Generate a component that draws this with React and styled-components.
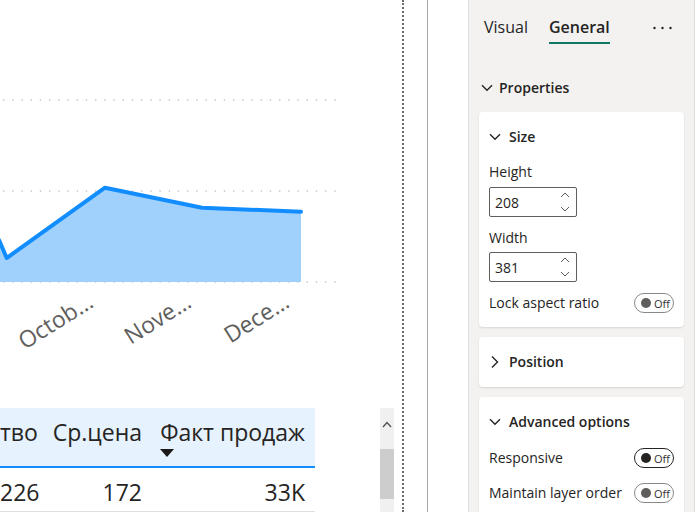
import React from "react";
import styled, { createGlobalStyle } from "styled-components";

const Global = createGlobalStyle`
  html, body { margin: 0; padding: 0; background: #fff; }
  body { font-family: "Open Sans", "Noto Sans", sans-serif; color: #252423; }
  * { box-sizing: border-box; }
`;

const Shell = styled.div`
  display: flex;
  width: 695px;
  height: 512px;
  overflow: hidden;
  background: #fff;
`;

const Canvas = styled.div`
  width: 404px;
  flex: none;
  border-right: 2px dotted #6a6a6a;
  display: flex;
  flex-direction: column;
  overflow: hidden;
`;

const ChartSvg = styled.svg`
  display: block;
  flex: none;
`;

const TableArea = styled.div`
  display: flex;
  align-items: flex-start;
`;

const Table = styled.div`
  width: 315px;
  flex: none;
`;

const Row = styled.div`
  display: grid;
  grid-template-columns: max-content 1fr 163px;
  padding-right: 10px;
  justify-items: end;
  font-size: 23px;
  line-height: 28px;
  white-space: nowrap;
  background: ${(p) => (p.$head ? "#e6f2fd" : "#fff")};
  border-bottom: ${(p) => (p.$head ? "2px solid #118dff" : "1px solid #e1dfdd")};
  padding-top: 10px;
  padding-bottom: ${(p) => (p.$head ? "9px" : "5px")};
  height: ${(p) => (p.$head ? "60px" : "44px")};
`;

const HeadCell = styled.div`
  display: flex;
  flex-direction: column;
  align-items: flex-end;
  min-width: 35px;
`;

const SortMark = styled.div`
  align-self: flex-start;
  margin-top: 3px;
  width: 0;
  height: 0;
  border-left: 7.5px solid transparent;
  border-right: 7.5px solid transparent;
  border-top: 8px solid #1b1a19;
`;

const Cell = styled.div`
  min-width: 35px;
  text-align: right;
`;

const Scrollbar = styled.div`
  margin-left: 65px;
  width: 14px;
  height: 104px;
  background: #f0f0f0;
  display: flex;
  flex-direction: column;
  align-items: center;
`;

const ScrollArrow = styled.svg`
  margin-top: 13px;
  display: block;
`;

const ScrollThumb = styled.div`
  margin-top: 21px;
  width: 14px;
  height: 50px;
  background: #cdcdcd;
`;

const Gutter = styled.div`
  width: 23px;
  flex: none;
`;

const Pane = styled.div`
  width: 41px;
  flex: none;
  border-left: 1px solid #a6a6a6;
`;

const Panel = styled.div`
  flex: 1;
  background: #f3f2f1;
  border-left: 1px solid #e1dfdd;
  border-right: 1px solid #e1dfdd;
  padding: 0 10px;
  display: flex;
  flex-direction: column;
`;

const TabBar = styled.div`
  display: flex;
  align-items: flex-start;
  padding: 16px 0 0 5px;
  gap: 21px;
`;

const Tab = styled.div`
  font-size: 16px;
  line-height: 22px;
  padding-bottom: 4px;
  font-weight: ${(p) => (p.$active ? 600 : 400)};
  border-bottom: 2px solid ${(p) => (p.$active ? "#117865" : "transparent")};
  color: #252423;
`;

const More = styled.svg`
  margin-left: auto;
  margin-right: 11px;
  margin-top: 10px;
  display: block;
`;

const SectionHead = styled.div`
  display: flex;
  align-items: center;
  gap: 6px;
  margin: 34px 0 14px 2px;
  font-size: 14px;
  font-weight: 600;
  line-height: 20px;
`;

const Card = styled.div`
  background: #fff;
  border-radius: 4px;
  box-shadow: 0 1px 2px rgba(0, 0, 0, 0.12);
  padding: 15px 10px ${(p) => (p.$pb || 15)}px 10px;
  margin-bottom: 10px;
`;

const CardHead = styled.div`
  display: flex;
  align-items: center;
  gap: 8px;
  font-size: 14px;
  font-weight: 600;
  line-height: 20px;
`;

const Label = styled.div`
  font-size: 14px;
  line-height: 20px;
  margin-top: ${(p) => p.$mt || 0}px;
`;

const NumBox = styled.div`
  margin-top: ${(p) => p.$mt || 5}px;
  width: 88px;
  height: 30px;
  border: 1px solid #605e5c;
  border-radius: 2px;
  display: flex;
  align-items: center;
  justify-content: space-between;
  padding: 0 6px 0 5px;
  font-size: 14px;
`;

const Spin = styled.div`
  display: flex;
  flex-direction: column;
  gap: 8px;
`;

const ToggleRow = styled.div`
  display: flex;
  align-items: center;
  justify-content: space-between;
  font-size: 14px;
  line-height: 20px;
  margin-top: ${(p) => p.$mt || 0}px;
`;

const Toggle = styled.div`
  width: 40px;
  height: 20px;
  border-radius: 10px;
  border: 1px solid ${(p) => (p.$hot ? "#252423" : "#8a8886")};
  display: flex;
  align-items: center;
  padding-left: 6px;
  gap: 3px;
  font-size: 11px;
  line-height: 1;
  color: #323130;
`;

const Knob = styled.span`
  width: 10px;
  height: 10px;
  border-radius: 50%;
  background: ${(p) => (p.$hot ? "#252423" : "#605e5c")};
  flex: none;
`;

const ChevDown = () => (
  <svg width="12" height="8" viewBox="0 0 12 8">
    <path d="M1 1.2 L6 6.2 L11 1.2" fill="none" stroke="#252423" strokeWidth="1.4" />
  </svg>
);

const ChevRight = () => (
  <svg width="12" height="14" viewBox="0 0 12 14">
    <path d="M3 1.5 L8.5 7 L3 12.5" fill="none" stroke="#252423" strokeWidth="1.4" />
  </svg>
);

const Spinner = () => (
  <Spin>
    <svg width="10" height="6" viewBox="0 0 10 6">
      <path d="M1 5 L5 1 L9 5" fill="none" stroke="#605e5c" strokeWidth="1" />
    </svg>
    <svg width="10" height="6" viewBox="0 0 10 6">
      <path d="M1 1 L5 5 L9 1" fill="none" stroke="#605e5c" strokeWidth="1" />
    </svg>
  </Spin>
);

const OffToggle = ({ hot }) => (
  <Toggle $hot={hot}>
    <Knob $hot={hot} />
    Off
  </Toggle>
);

const labels = [
  { x: 95, text: "Octob…" },
  { x: 193, text: "Nove…" },
  { x: 291, text: "Dece…" },
];

const Chart = () => (
  <ChartSvg width="402" height="408" viewBox="0 0 402 408">
    {[100, 191, 282].map((y) => (
      <line key={y} x1="3" x2="338" y1={y} y2={y} stroke="#c8c6c4" strokeWidth="1.3" strokeDasharray="1.4 7.8" />
    ))}
    <path d="M0 242 L6.7 258 L105 187.7 L202 207.7 L301 211.7 L301 282 L0 282 Z" fill="#a0d0fc" />
    <path d="M-1 240 L6.7 258 L105 187.7 L202 207.7 L301 211.7" fill="none" stroke="#118dff" strokeWidth="4" strokeLinejoin="round" strokeLinecap="round" />
    {labels.map((l) => (
      <text
        key={l.text}
        x={l.x}
        y={306}
        textAnchor="end"
        transform={`rotate(-32 ${l.x} 306)`}
        fontFamily="'Open Sans', sans-serif"
        fontSize="23"
        fill="#605e5c"
      >
        {l.text}
      </text>
    ))}
  </ChartSvg>
);

export default function App() {
  return (
    <>
      <Global />
      <Shell>
        <Canvas>
          <Chart />
          <TableArea>
            <Table>
              <Row $head>
                <HeadCell>тво</HeadCell>
                <HeadCell>Ср.цена</HeadCell>
                <HeadCell>
                  Факт продаж
                  <SortMark />
                </HeadCell>
              </Row>
              <Row>
                <Cell>226</Cell>
                <Cell>172</Cell>
                <Cell>33K</Cell>
              </Row>
            </Table>
            <Scrollbar>
              <ScrollArrow width="10" height="7" viewBox="0 0 10 7">
                <path d="M1 6 L5 1.5 L9 6" fill="none" stroke="#505050" strokeWidth="1.3" />
              </ScrollArrow>
              <ScrollThumb />
            </Scrollbar>
          </TableArea>
        </Canvas>
        <Gutter />
        <Pane />
        <Panel>
          <TabBar>
            <Tab>Visual</Tab>
            <Tab $active>General</Tab>
            <More width="20" height="4" viewBox="0 0 20 4">
              <circle cx="1.5" cy="2" r="1.2" fill="#252423" />
              <circle cx="9.5" cy="2" r="1.2" fill="#252423" />
              <circle cx="17.5" cy="2" r="1.2" fill="#252423" />
            </More>
          </TabBar>
          <SectionHead>
            <ChevDown />
            Properties
          </SectionHead>
          <Card $pb={14}>
            <CardHead>
              <ChevDown />
              Size
            </CardHead>
            <Label $mt={15}>Height</Label>
            <NumBox>
              208
              <Spinner />
            </NumBox>
            <Label $mt={11}>Width</Label>
            <NumBox $mt={4}>
              381
              <Spinner />
            </NumBox>
            <ToggleRow $mt={11}>
              Lock aspect ratio
              <OffToggle />
            </ToggleRow>
          </Card>
          <Card>
            <CardHead>
              <ChevRight />
              Position
            </CardHead>
          </Card>
          <Card>
            <CardHead>
              <ChevDown />
              Advanced options
            </CardHead>
            <ToggleRow $mt={16}>
              Responsive
              <OffToggle hot />
            </ToggleRow>
            <ToggleRow $mt={15}>
              Maintain layer order
              <OffToggle />
            </ToggleRow>
          </Card>
        </Panel>
      </Shell>
    </>
  );
}
